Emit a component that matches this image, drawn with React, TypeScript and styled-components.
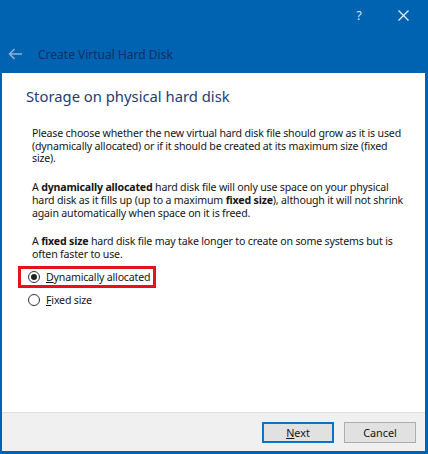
import React from "react";
import styled, { createGlobalStyle } from "styled-components";

const Global = createGlobalStyle`
  html, body { margin: 0; padding: 0; background: #0063b1; }
  body { font-family: "Noto Sans", "Open Sans", sans-serif; }
`;

const Window = styled.div`
  width: 428px;
  height: 454px;
  background: #0063b1;
  display: flex;
  flex-direction: column;
  box-sizing: border-box;
  padding: 0 3px 3px 2px;
`;

const TitleBar = styled.div`
  height: 30px;
  display: flex;
  justify-content: flex-end;
  align-items: center;
`;

const CaptionButton = styled.div`
  width: 44px;
  height: 30px;
  display: flex;
  align-items: center;
  justify-content: center;
  color: #dce9f6;
  font-family: "Noto Sans", sans-serif;
  font-size: 12px;
`;

const Header = styled.div`
  height: 43px;
  box-sizing: border-box;
  padding: 5px 0 0 6px;
  display: flex;
  align-items: center;
  gap: 16px;
`;

const HeaderTitle = styled.div`
  font-size: 12px;
  color: #142f63;
`;

const Client = styled.div`
  flex: 1;
  background: #ffffff;
  display: flex;
  flex-direction: column;
`;

const Body = styled.div`
  flex: 1;
  padding: 11px 0 0 24px;
  & > p:last-of-type {
    margin-bottom: 0;
  }
`;

const Heading = styled.h1`
  margin: 0 0 19px 0;
  font-weight: 400;
  font-size: 14.8px;
  line-height: 24px;
  color: #1f3d72;
`;

const Paragraph = styled.p`
  margin: 0 0 16px 6px;
  font-size: 10.6px;
  letter-spacing: -0.18px;
  line-height: 12.7px;
  white-space: nowrap;
  color: #151515;
`;

const RadioList = styled.div`
  display: flex;
  flex-direction: column;
  gap: 1px;
  margin-top: 5px;
`;

const RadioRow = styled.label<{ $highlight?: boolean }>`
  display: flex;
  align-items: center;
  gap: 6px;
  width: 138px;
  height: 22px;
  box-sizing: border-box;
  padding-left: 7px;
  margin-left: -8px;
  border: 3px solid ${(p) => (p.$highlight ? "#e3131c" : "transparent")};
  font-size: 10.6px;
  letter-spacing: -0.18px;
  white-space: nowrap;
  color: #151515;
`;

const RadioCircle = styled.span<{ $checked?: boolean }>`
  flex: none;
  width: 12px;
  height: 12px;
  box-sizing: border-box;
  border: 1px solid #333;
  border-radius: 50%;
  display: flex;
  align-items: center;
  justify-content: center;
  background: #fff;
  &::after {
    content: "";
    width: 6px;
    height: 6px;
    border-radius: 50%;
    background: ${(p) => (p.$checked ? "#222" : "transparent")};
  }
`;

const Footer = styled.div`
  height: 39px;
  box-sizing: border-box;
  background: #f0f0f0;
  border-top: 1px solid #dfdfdf;
  display: flex;
  justify-content: flex-end;
  align-items: center;
  gap: 10px;
  padding-right: 9px;
`;

const Button = styled.button<{ $default?: boolean }>`
  width: 72px;
  height: 21px;
  box-sizing: border-box;
  font-family: "Noto Sans", sans-serif;
  font-size: 10.8px;
  color: #151515;
  background: #e1e1e1;
  border: ${(p) => (p.$default ? "2px solid #0a73c9" : "1px solid #adadad")};
  padding: 0;
  display: flex;
  align-items: center;
  justify-content: center;
`;

const U = styled.span`
  text-decoration: underline;
`;

const BackArrow = () => (
  <svg width="14" height="12" viewBox="0 0 14 12">
    <path
      d="M14 6H1.5M6.5 1L1.5 6l5 5"
      fill="none"
      stroke="#8fb0d6"
      strokeWidth="1.5"
    />
  </svg>
);

const CloseIcon = () => (
  <svg width="11" height="11" viewBox="0 0 11 11">
    <path d="M0.5 0.5l10 10M10.5 0.5l-10 10" stroke="#e3eef8" strokeWidth="1.3" />
  </svg>
);

export default function App() {
  return (
    <>
      <Global />
      <Window>
        <TitleBar>
          <CaptionButton>?</CaptionButton>
          <CaptionButton>
            <CloseIcon />
          </CaptionButton>
        </TitleBar>
        <Header>
          <BackArrow />
          <HeaderTitle>Create Virtual Hard Disk</HeaderTitle>
        </Header>
        <Client>
          <Body>
            <Heading>Storage on physical hard disk</Heading>
            <Paragraph>
              Please choose whether the new virtual hard disk file should grow as it is used
              <br />
              (dynamically allocated) or if it should be created at its maximum size (fixed
              <br />
              size).
            </Paragraph>
            <Paragraph>
              A <b>dynamically allocated</b> hard disk file will only use space on your physical
              <br />
              hard disk as it fills up (up to a maximum <b>fixed size</b>), although it will not shrink
              <br />
              again automatically when space on it is freed.
            </Paragraph>
            <Paragraph>
              A <b>fixed size</b> hard disk file may take longer to create on some systems but is
              <br />
              often faster to use.
            </Paragraph>
            <RadioList>
              <RadioRow $highlight>
                <RadioCircle $checked />
                <span>
                  <U>D</U>ynamically allocated
                </span>
              </RadioRow>
              <RadioRow>
                <RadioCircle />
                <span>
                  <U>F</U>ixed size
                </span>
              </RadioRow>
            </RadioList>
          </Body>
          <Footer>
            <Button $default>
              <span>
                <U>N</U>ext
              </span>
            </Button>
            <Button>Cancel</Button>
          </Footer>
        </Client>
      </Window>
    </>
  );
}
